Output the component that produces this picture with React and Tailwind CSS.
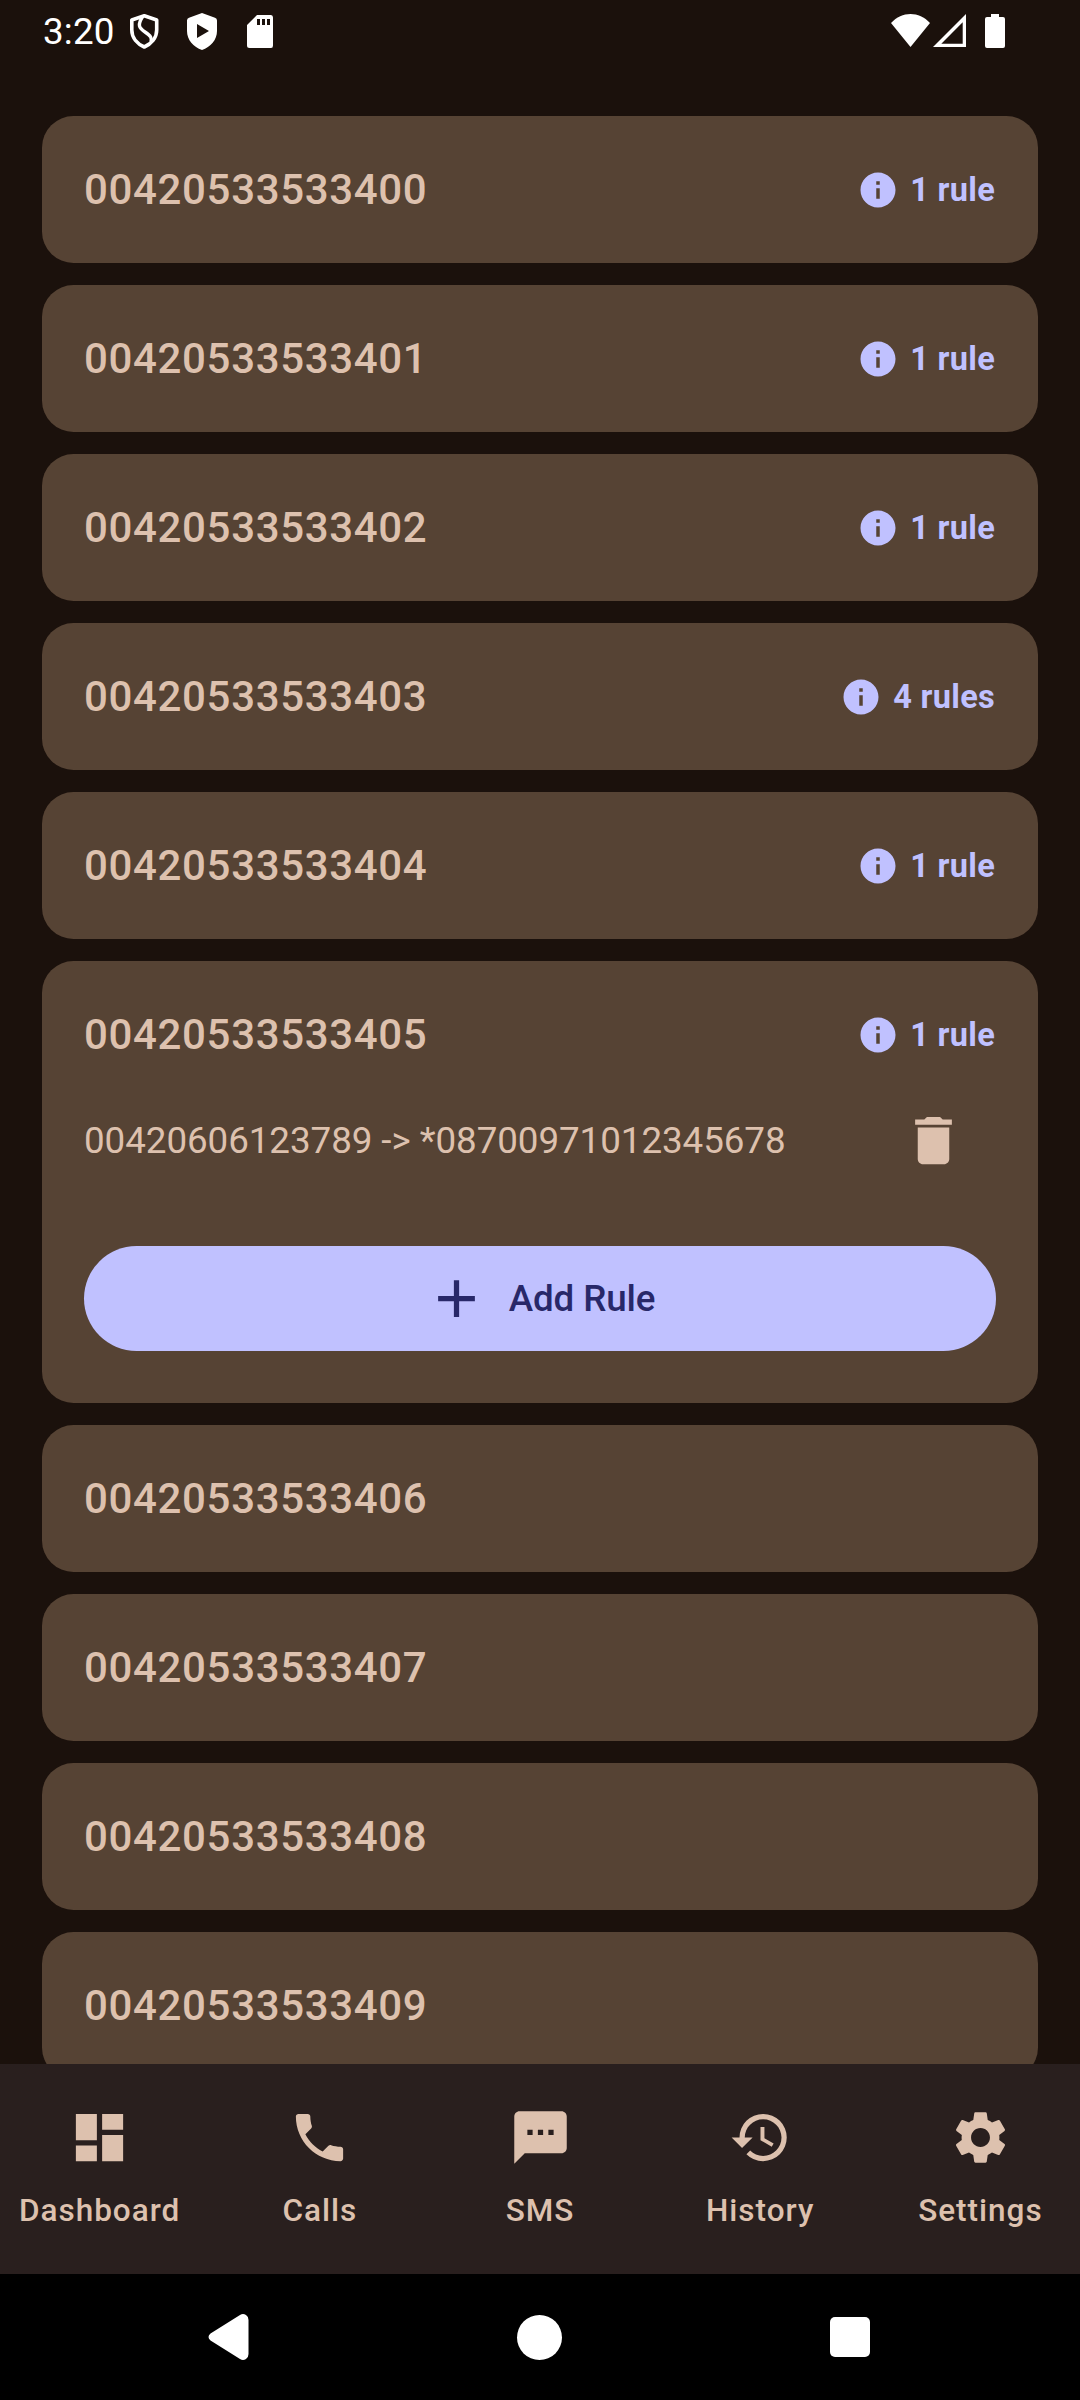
import React, { useState } from 'react';
import { MdAdd, MdDashboard, MdDelete, MdHistory, MdInfo, MdPhone, MdSettings, MdSms } from 'react-icons/md';

const NUMBERS = [
  { number: '00420533533400', ruleCount: 1 },
  { number: '00420533533401', ruleCount: 1 },
  { number: '00420533533402', ruleCount: 1 },
  { number: '00420533533403', ruleCount: 4 },
  { number: '00420533533404', ruleCount: 1 },
  { number: '00420533533405', ruleCount: 1, rules: ['00420606123789 -> *08700971012345678'] },
  { number: '00420533533406', ruleCount: 0 },
  { number: '00420533533407', ruleCount: 0 },
  { number: '00420533533408', ruleCount: 0 },
  { number: '00420533533409', ruleCount: 0 },
];

const TABS = [
  { label: 'Dashboard', icon: MdDashboard },
  { label: 'Calls', icon: MdPhone },
  { label: 'SMS', icon: MdSms },
  { label: 'History', icon: MdHistory },
  { label: 'Settings', icon: MdSettings },
];

function StatusBar() {
  return (
    <div className="flex h-[63px] shrink-0 items-start pl-[43px] pr-[75px] text-white">
      <span className="mt-[10px] w-[72px] text-[36.75px] leading-[43px] tracking-[0.2px]">3:20</span>

      {/* Notification icons */}
      <svg className="ml-[14px] mt-[13px]" width="32" height="38" viewBox="0 0 32 38" fill="none" stroke="currentColor" strokeWidth="3.6">
        <path d="M15.3 2.8 L27.7 7 V17 C27.7 25 22 31 15.3 34 C8.5 31 2.8 25 2.8 17 V7 Z" strokeLinejoin="round" />
        <path d="M14 3 C8 12 10 15 16 19 C22 23 23 25 22 29" strokeWidth="3.4" />
      </svg>
      <svg className="ml-[25px] mt-[13px]" width="32" height="38" viewBox="0 0 32 38" fill="currentColor">
        <path fillRule="evenodd" d="M16 0 L29 4.7 Q31 5.5 31 7.5 V18 C31 27 24.5 34 16 37 C7.5 34 1 27 1 18 V7.5 Q1 5.5 3 4.7 Z M11 11 V25 L23 18 Z" />
      </svg>
      <svg className="ml-[29px] mt-[15px]" width="27" height="34" viewBox="0 0 27 34" fill="currentColor">
        <path fillRule="evenodd" d="M10 0 H24 Q26 0 26 2.5 V30.5 Q26 33 24 33 H2.5 Q0 33 0 30.5 V10 Z M10 4 V10 H13 V4 Z M15 4 V10 H18 V4 Z M20 4 V10 H23 V4 Z" />
      </svg>

      {/* Connectivity and battery */}
      <svg className="ml-auto mt-[14px]" width="39" height="33" viewBox="0 0 39 33" fill="currentColor">
        <path d="M0 9 C11 -3 28 -3 39 9 L19.5 33 Z" />
      </svg>
      <svg className="ml-[3px] mt-[14px]" width="33" height="33" viewBox="0 0 33 33" fill="currentColor">
        <path fillRule="evenodd" d="M33 0 V33 H0 Z M29.7 8.3 L8.3 29.7 H29.7 Z" />
      </svg>
      <svg className="ml-[19px] mt-[14px]" width="20" height="34" viewBox="0 0 20 34" fill="currentColor">
        <path d="M6 0 H14 V3 H18 Q20 3 20 5 V32 Q20 34 18 34 H2 Q0 34 0 32 V5 Q0 3 2 3 H6 Z" />
      </svg>
    </div>
  );
}

function NumberCard({ item, onDelete }) {
  const { number, ruleCount, rules } = item;

  return (
    <div className="shrink-0 rounded-[31.5px] bg-[#564334] px-[42px] text-[#ddc1ae]">
      <div className="flex h-[147px] items-center justify-between">
        <span className="text-[42px] font-medium leading-none tracking-[0.65px]">{number}</span>
        {ruleCount > 0 && (
          <span className="mr-[1px] flex items-center gap-[11px] text-[#c0c1ff]">
            <MdInfo size={42} />
            <span className="text-[32.5px] font-bold leading-[32px] tracking-[0.3px]">
              {ruleCount} {ruleCount === 1 ? 'rule' : 'rules'}
            </span>
          </span>
        )}
      </div>

      {/* Expanded rule list */}
      {rules && (
        <div className="pb-[52px]">
          {rules.map((rule) => (
            <div key={rule} className="flex h-[66px] items-center justify-between">
              <span className="text-[36.75px] leading-none tracking-[-0.06px]">{rule}</span>
              <button className="mb-[2px] mr-[31px]" onClick={() => onDelete(number, rule)}>
                <MdDelete size={63} />
              </button>
            </div>
          ))}
          <button className="mt-[72px] flex h-[105px] w-full items-center justify-center gap-[21px] rounded-full bg-[#c0c1ff] text-[#282869]">
            <MdAdd size={63} />
            <span className="pt-[2px] text-[36.75px] font-medium leading-none tracking-[-0.15px]">Add Rule</span>
          </button>
        </div>
      )}
    </div>
  );
}

function BottomNav() {
  return (
    <nav className="flex h-[210px] shrink-0 gap-[21px] bg-[#291f1e] pt-[42px] text-[#ddc1ae]">
      {TABS.map(({ label, icon: Icon }) => (
        <button key={label} className="flex flex-1 basis-0 flex-col items-center">
          <Icon size={63} />
          <span className="mt-[20.5px] text-[31.5px] font-medium leading-[42px] tracking-[1px]">{label}</span>
        </button>
      ))}
    </nav>
  );
}

function SystemNav() {
  return (
    <div className="flex h-[126px] shrink-0 items-center justify-between bg-black pl-[208px] pr-[210px] text-white">
      <svg width="41" height="46" viewBox="0 0 41 46" fill="currentColor">
        <path d="M2.5 19.5 L32 1 Q35 -1 38 1 Q40.5 2.5 40.5 6 V40 Q40.5 43.5 38 45 Q35 47 32 45 L2.5 26.5 Q-1.5 23 2.5 19.5 Z" />
      </svg>
      <div className="size-[45px] rounded-full bg-white" />
      <div className="size-[40px] rounded-[5px] bg-white" />
    </div>
  );
}

export default function App() {
  const [numbers, setNumbers] = useState(NUMBERS);

  const handleDelete = (number, rule) => {
    setNumbers(prev => prev.map(item => (
      item.number === number
        ? { ...item, ruleCount: item.ruleCount - 1, rules: item.rules.filter(r => r !== rule) }
        : item
    )));
  };

  return (
    <div className="flex h-[2400px] w-[1080px] flex-col overflow-hidden bg-[#1b110c] font-['Roboto',sans-serif]">
      <StatusBar />
      <main className="flex min-h-0 flex-1 flex-col gap-[22px] overflow-hidden px-[42px] pt-[53px]">
        {numbers.map((item) => (
          <NumberCard key={item.number} item={item} onDelete={handleDelete} />
        ))}
      </main>
      <BottomNav />
      <SystemNav />
    </div>
  );
}
